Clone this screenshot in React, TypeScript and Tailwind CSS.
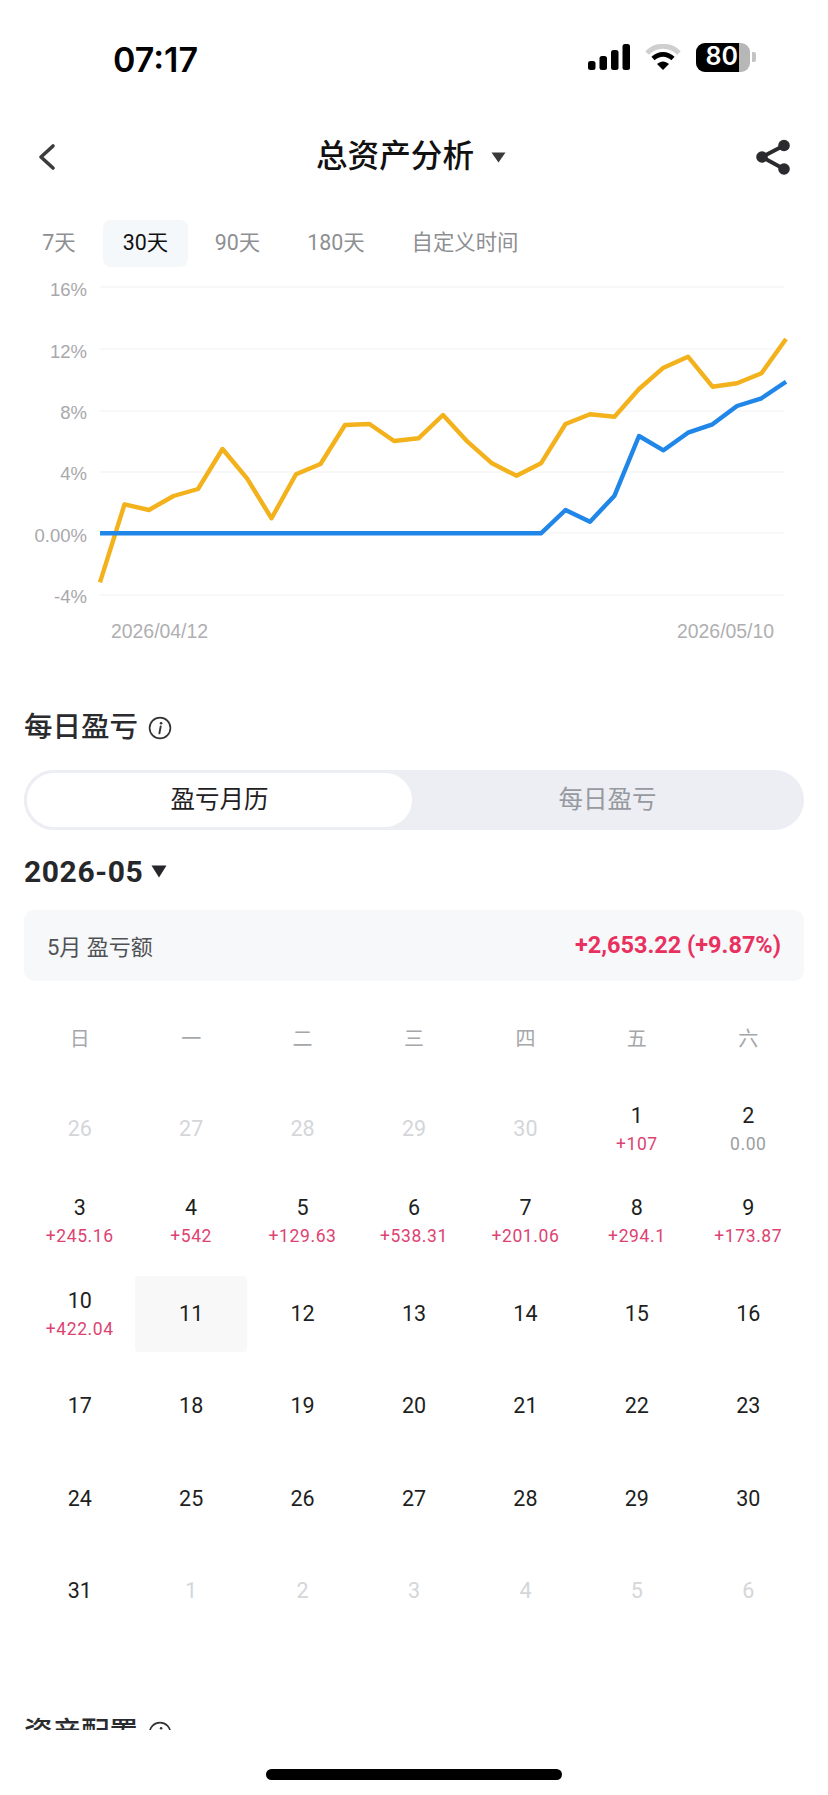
const yellowZ = [937,703,720,678,657,537,625,745,613,582,465,462,513,505,435,515,580,617,580,462,433,440,357,293,260,350,340,310,207];
const blueZ = [790,790,790,790,790,790,790,790,790,790,790,790,790,790,790,790,790,790,790,720,755,677,498,541,488,463,408,385,335];
const pts = (arr: number[]) => arr.map((z, i) => `${(100 + i * 24.5).toFixed(1)},${(270 + z / 3).toFixed(1)}`).join(" ");

const axis: [string, number, number][] = [
  ["16%", 287, 289],
  ["12%", 349, 351],
  ["8%", 411, 412],
  ["4%", 472, 473],
  ["0.00%", 533, 535],
  ["-4%", 595, 596],
];

type Day = { d: number; sub?: string; muted?: boolean; zero?: boolean; today?: boolean };
const days: Day[] = [
  { d: 26, muted: true }, { d: 27, muted: true }, { d: 28, muted: true }, { d: 29, muted: true }, { d: 30, muted: true },
  { d: 1, sub: "+107" }, { d: 2, sub: "0.00", zero: true },
  { d: 3, sub: "+245.16" }, { d: 4, sub: "+542" }, { d: 5, sub: "+129.63" }, { d: 6, sub: "+538.31" }, { d: 7, sub: "+201.06" }, { d: 8, sub: "+294.1" }, { d: 9, sub: "+173.87" },
  { d: 10, sub: "+422.04" }, { d: 11, today: true }, { d: 12 }, { d: 13 }, { d: 14 }, { d: 15 }, { d: 16 },
  { d: 17 }, { d: 18 }, { d: 19 }, { d: 20 }, { d: 21 }, { d: 22 }, { d: 23 },
  { d: 24 }, { d: 25 }, { d: 26 }, { d: 27 }, { d: 28 }, { d: 29 }, { d: 30 },
  { d: 31 }, { d: 1, muted: true }, { d: 2, muted: true }, { d: 3, muted: true }, { d: 4, muted: true }, { d: 5, muted: true }, { d: 6, muted: true },
];

function Info() {
  return (
    <svg width="24" height="24" viewBox="0 0 24 24" fill="none" stroke="#333" strokeWidth="1.7">
      <circle cx="12" cy="12" r="10.4" />
      <path d="M12.7 10.4 L11.4 17.4" strokeWidth="1.9" strokeLinecap="round" />
      <circle cx="13.1" cy="7.2" r="1.3" fill="#333" stroke="none" />
    </svg>
  );
}

function Heading({ label }: { label: string }) {
  return (
    <div className="flex h-[44px] items-center gap-[10px] px-[24px]">
      <span className="text-[28.5px] leading-[44px] font-medium text-[#2a2b2e]">{label}</span>
      <Info />
    </div>
  );
}

export default function App() {
  return (
    <div className="flex h-[1795px] w-[828px] flex-col overflow-hidden bg-white font-['Roboto','Noto_Sans_CJK_SC',sans-serif]">
      {/* status bar */}
      <div className="flex h-[114px] shrink-0 items-center justify-between pr-[72px] pl-[113px]">
        <span className="pt-[4px] font-['Inter',sans-serif] text-[34px] font-semibold text-black">07:17</span>
        <div className="flex items-center">
          <svg width="42" height="26" viewBox="0 0 42 26" fill="#000">
            <rect x="0" y="17" width="7.5" height="9" rx="2.5" />
            <rect x="11.5" y="12" width="7.5" height="14" rx="2.5" />
            <rect x="23" y="6" width="7.5" height="20" rx="2.5" />
            <rect x="34.5" y="0" width="7.5" height="26" rx="2.5" />
          </svg>
          <svg className="ml-[15px]" width="36" height="26" viewBox="0 0 36 26" fill="none">
            <path d="M2 9 C11 0 25 0 34 9" stroke="#cfcfcf" strokeWidth="5" />
            <path d="M8 14.5 C14 9 22 9 28 14.5" stroke="#000" strokeWidth="4.6" />
            <path d="M12 20 L18 26 L24 20 C20 16.5 16 16.5 12 20 Z" fill="#000" />
          </svg>
          <div className="ml-[15px] flex h-[29px] w-[54px] overflow-hidden rounded-[9px] bg-[#b7b7b7]">
            <div className="flex w-[43px] items-center justify-end bg-black pr-[1px] pb-[1px] font-['Inter',sans-serif] text-[25px] leading-none font-semibold text-white">80</div>
          </div>
          <div className="ml-[2px] h-[10px] w-[4px] rounded-r-[2px] bg-[#c4c4c4]" />
        </div>
      </div>

      {/* nav bar */}
      <div className="flex h-[86px] shrink-0 items-center justify-between pr-[36px] pl-[38px]">
        <svg width="18" height="28" viewBox="0 0 18 28" fill="none" stroke="#3c3c3f" strokeWidth="3.6" strokeLinecap="round" strokeLinejoin="round">
          <path d="M15 3 L3 14 L15 25" />
        </svg>
        <div className="ml-[10px] flex items-center gap-[17px]">
          <span className="text-[31.6px] leading-[44px] font-medium text-[#111]">总资产分析</span>
          <svg width="15" height="11" viewBox="0 0 15 11" fill="#3a3a3c">
            <path d="M0.5 0.5 H14.5 L7.5 10.5 Z" />
          </svg>
        </div>
        <svg width="36" height="36" viewBox="0 0 36 36" fill="#2b2b2f" stroke="#2b2b2f">
          <path d="M28 6.5 L6 18 L28 30" fill="none" strokeWidth="3.8" />
          <circle cx="28" cy="6.5" r="5.8" stroke="none" />
          <circle cx="6" cy="18" r="5.8" stroke="none" />
          <circle cx="28" cy="30" r="5.8" stroke="none" />
        </svg>
      </div>

      {/* range tabs */}
      <div className="mt-[20px] flex h-[47px] shrink-0 gap-[9px] px-[24px] text-[21.4px] text-[#8e8f92]">
        <div className="flex w-[70px] items-center justify-center">7天</div>
        <div className="flex w-[85px] items-center justify-center rounded-[8px] bg-[#f5f8fa] text-[#111]">30天</div>
        <div className="flex w-[81px] items-center justify-center">90天</div>
        <div className="flex w-[98px] items-center justify-center">180天</div>
        <div className="flex w-[142px] items-center justify-center">自定义时间</div>
      </div>

      {/* chart */}
      <svg className="block shrink-0" width="828" height="383" viewBox="0 267 828 383">
        {axis.map(([t, gy, ly]) => (
          <g key={t}>
            <line x1="100" x2="784" y1={gy} y2={gy} stroke="#f6f6f7" strokeWidth="1.5" />
            <text x="87" y={ly + 6.5} textAnchor="end" fontFamily="Liberation Sans" fontSize="18.5" fill="#a8a8ab">{t}</text>
          </g>
        ))}
        <polyline points={pts(yellowZ)} fill="none" stroke="#f3b11c" strokeWidth="4.4" strokeLinejoin="round" />
        <polyline points={pts(blueZ)} fill="none" stroke="#2086e8" strokeWidth="4.4" strokeLinejoin="round" />
        <text x="111" y="638" fontFamily="Liberation Sans" fontSize="19.4" fill="#afafb2">2026/04/12</text>
        <text x="677" y="638" fontFamily="Liberation Sans" fontSize="19.4" fill="#afafb2">2026/05/10</text>
      </svg>

      {/* daily pnl */}
      <div className="mt-[56px] shrink-0">
        <Heading label="每日盈亏" />
      </div>

      <div className="mx-[24px] mt-[20px] flex h-[60px] shrink-0 rounded-[30px] bg-[#eceef3] text-[24.5px]">
        <div className="flex w-[391px] items-center justify-center rounded-[30px] border-[3px] border-[#eceef3] bg-white text-[#1f2023]">盈亏月历</div>
        <div className="flex flex-1 items-center justify-center pr-[4px] text-[#96999f]">每日盈亏</div>
      </div>

      <div className="mt-[21px] flex h-[40px] shrink-0 items-center gap-[8px] px-[24px]">
        <span className="text-[30px] font-bold tracking-[0.6px] text-[#26272a]">2026-05</span>
        <svg width="16" height="13" viewBox="0 0 16 13" fill="#26272a">
          <path d="M0.5 0.5 H15.5 L8 12.5 Z" />
        </svg>
      </div>

      <div className="mx-[24px] mt-[19px] flex h-[71px] shrink-0 items-center justify-between rounded-[10px] bg-[#f7f8fa] pr-[23px] pl-[23px]">
        <span className="pt-[3px] text-[22px] text-[#505155]">5月 盈亏额</span>
        <span className="pt-[1px] text-[23.5px] font-bold text-[#e8315f]">+2,653.22 (+9.87%)</span>
      </div>

      {/* calendar */}
      <div className="mx-[24px] mt-[38px] grid h-[40px] shrink-0 grid-cols-7 text-[20px] text-[#a6a7aa]">
        {["日", "一", "二", "三", "四", "五", "六"].map((w) => (
          <div key={w} className="flex items-center justify-center">{w}</div>
        ))}
      </div>

      <div className="mx-[24px] mt-[32px] grid shrink-0 grid-cols-7 auto-rows-[76px] gap-y-[16.5px]">
        {days.map((c, i) => (
          <div
            key={i}
            className={`flex flex-col items-center justify-center rounded-[4px] ${c.today ? "bg-[#f8f8f9]" : ""}`}
          >
            <div className={`flex h-[30px] items-center text-[21.5px] ${c.muted ? "text-[#d4d6d9]" : "text-[#1e1f22]"} ${c.sub ? "pt-[2px]" : ""}`}>{c.d}</div>
            {c.sub && (
              <div className={`flex h-[28px] items-center text-[17.5px] tracking-[0.6px] ${c.zero ? "text-[#9c9ea2]" : "text-[#dc4372]"}`}>{c.sub}</div>
            )}
          </div>
        ))}
      </div>

      {/* next section, cut off by the scroll edge */}
      <div className="mt-[81.5px] h-[19px] shrink-0 overflow-hidden">
        <Heading label="资产配置" />
      </div>

      {/* home indicator */}
      <div className="mx-auto mt-[39px] h-[11px] w-[296px] shrink-0 rounded-full bg-black" />
    </div>
  );
}
